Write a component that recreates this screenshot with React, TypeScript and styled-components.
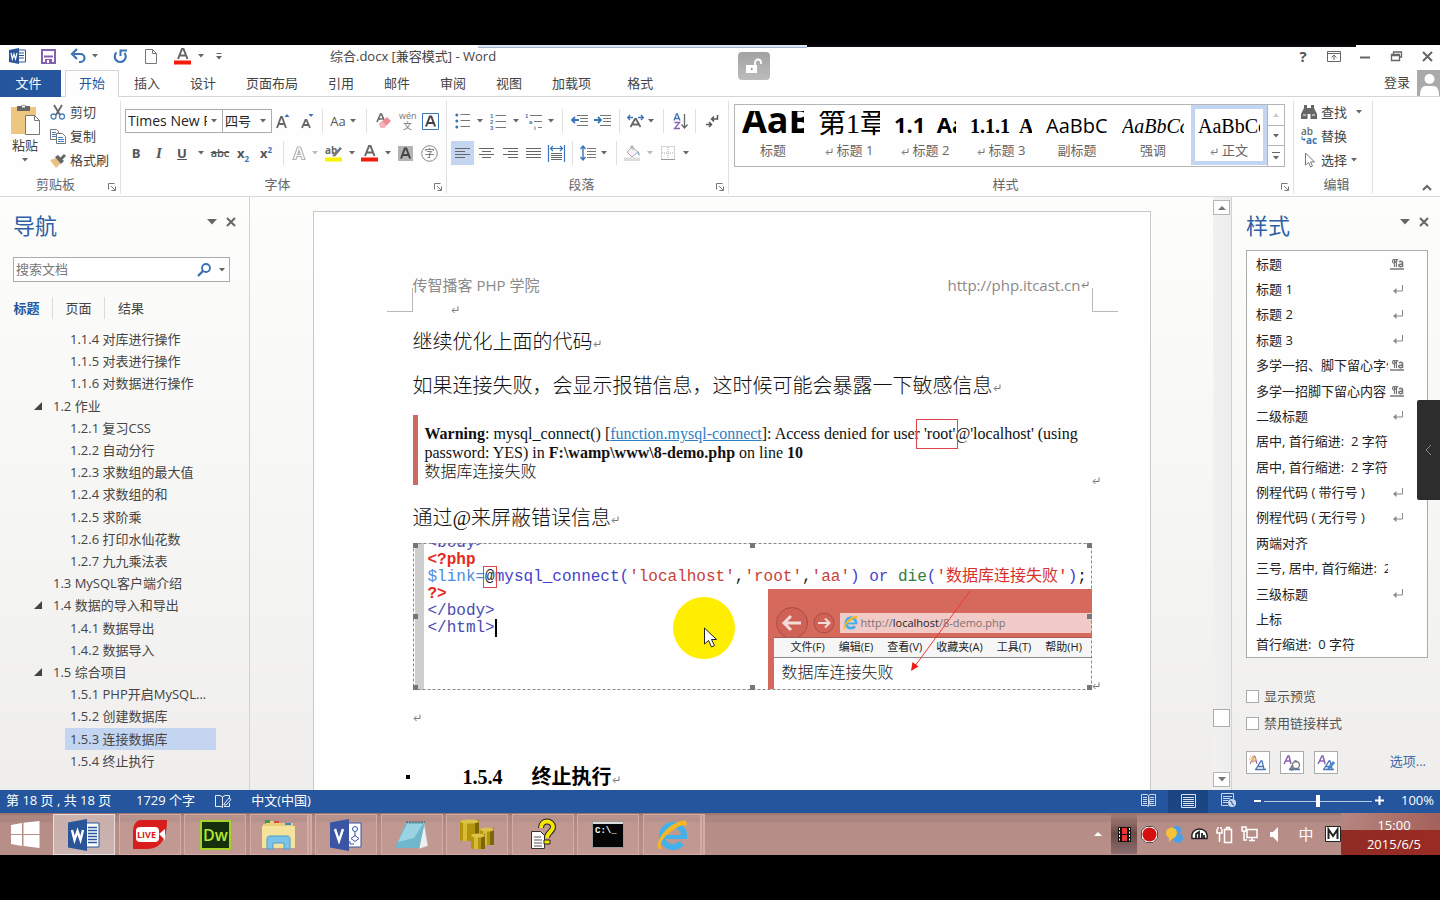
import React from 'react';
import styled, { createGlobalStyle, css } from 'styled-components';

const UI = `"Open Sans", "Noto Sans", "Noto Sans CJK SC", sans-serif`;
const SERIF = `"Liberation Serif", "Noto Sans CJK SC", serif`;
const MONO = `"Liberation Mono", "Noto Sans CJK SC", monospace`;
const BLUE = '#25569d';

const Global = createGlobalStyle`
  * { box-sizing: border-box; }
  body { margin: 0; background: #000; font: 13px/20px ${UI}; color: #444; }
  button, input, select { font: inherit; color: inherit; }
  button { border: 0; padding: 0; background: none; cursor: pointer; }
  svg { display: block; flex: none; overflow: visible; }
`;

const Screen = styled.div`
  min-height: 100vh;
  padding: 45px 0;
  display: flex;
  flex-direction: column;
  position: relative;
`;

const Row = styled.div<{ $gap?: number }>`
  display: flex;
  align-items: center;
  gap: ${p => p.$gap ?? 0}px;
`;

/* ---------- title bar and tabs ---------- */
const TitleBar = styled.header`
  height: 25px;
  display: flex;
  align-items: center;
  background: #fefefe;
  padding: 0 0 3px 8px;
`;
const QuickBar = styled.div`
  display: flex;
  align-items: center;
  width: 322px;
`;
const Tool = styled.button<{ $w: number; $on?: boolean; $dark?: boolean }>`
  width: ${p => p.$w}px;
  height: 24px;
  flex: none;
  display: flex;
  align-items: center;
  justify-content: center;
  background: ${p => (p.$on ? '#c3d5f1' : p.$dark ? '#1b4583' : 'none')};
`;
const DocTitle = styled.h1`
  margin: 0;
  font-size: 13px;
  font-weight: 400;
  flex: 1;
`;
const WindowButtons = styled.div`
  display: flex;
  gap: 5px;
`;
const TopStrip = styled.div`
  position: absolute;
  top: 45px;
  left: 33.2%;
  right: 5.8%;
  height: 2px;
  display: flex;
`;
const StripBlue = styled.div`
  flex: 329;
  height: 3px;
  background: #dbe6f5;
  border-bottom: 1px solid #9fb3d3;
`;
const StripBlack = styled.div`
  flex: 550;
  background: #0b0b12;
`;
const LockBadge = styled.button`
  position: absolute;
  top: 52px;
  left: 738px;
  width: 32px;
  height: 28px;
  border-radius: 4px;
  background: linear-gradient(#a2a2a2, #bcbcbc);
  display: flex;
  align-items: center;
  justify-content: center;
`;
const TabRow = styled.nav`
  height: 27px;
  display: flex;
  background: #fefefe;
  border-bottom: 1px solid #d4d4d4;
`;
const FileTab = styled.button`
  width: 61px;
  height: 27px;
  padding: 0 4px 2px 0;
  background: ${BLUE};
  color: #fff;
`;
const Tab = styled.button<{ $active?: boolean; $apart?: boolean }>`
  height: 27px;
  padding: 0 15px 2px;
  ${p => p.$apart && css`margin-left: 6px;`}
  ${p => p.$active && css`
    width: 54px;
    margin: 0 0 0 4px;
    padding: 0 0 2px;
    color: ${BLUE};
    background: #fefefe;
    border: 1px solid #d4d4d4;
    border-bottom: 0;
  `}
`;
const SignIn = styled.div`
  margin-left: auto;
  display: flex;
  gap: 7px;
  button { padding-bottom: 2px; }
`;

/* ---------- ribbon ---------- */
const Ribbon = styled.section`
  height: 100px;
  display: flex;
  background: #fefefe;
  border-bottom: 1px solid #d9d9d9;
  position: relative;
`;
const Group = styled.div<{ $w?: number; $pad?: number; $grow?: boolean }>`
  ${p => (p.$grow ? css`flex: 1; min-width: 0;` : css`width: ${p.$w}px; flex: none;`)}
  display: flex;
  flex-direction: column;
  padding-left: ${p => p.$pad ?? 4}px;
  border-right: 1px solid;
  border-image: linear-gradient(transparent 4%, #e0e0e0 5%, #e0e0e0 96%, transparent 97%) 1;
`;
const GroupBody = styled.div<{ $top: number }>`
  height: 78px;
  padding-top: ${p => p.$top}px;
`;
const GroupFoot = styled.div`
  height: 20px;
  display: flex;
  align-items: center;
  padding-bottom: 2px;
  color: #666;
  & > span { flex: 1; text-align: center; }
`;
const Launcher = styled.button`
  width: 16px;
  height: 16px;
  padding: 6px 0 0 4px;
`;
const ToolRows = styled.div`
  display: flex;
  flex-direction: column;
  gap: 8px;
`;
const ToolRow = styled.div`
  height: 24px;
  display: flex;
  align-items: center;
`;
const SepBox = styled.span<{ $w: number }>`
  width: ${p => p.$w}px;
  height: 24px;
  flex: none;
  display: flex;
  justify-content: center;
  &::before { content: ''; width: 1px; background: #e0e0e0; }
`;
const PasteButton = styled.button`
  width: 36px;
  height: 70px;
  display: flex;
  flex-direction: column;
  align-items: center;
  span { line-height: 18px; margin-bottom: 4px; }
`;
const SmallButton = styled.button`
  height: 24px;
  display: flex;
  align-items: center;
  gap: 4px;
  padding-bottom: 2px;
`;
const ComboWrap = styled.div<{ $w: number }>`
  width: ${p => p.$w}px;
  height: 24px;
  flex: none;
  display: flex;
  align-items: center;
  gap: 4px;
  border: 1px solid #ababab;
  margin-right: -1px;
  padding-right: 5px;
  background: #fff;
`;
const Combo = styled.select<{ $size?: number }>`
  appearance: none;
  flex: 1;
  min-width: 0;
  height: 20px;
  border: 0;
  padding: 0 0 0 2px;
  background: none;
  color: #222;
  font-size: ${p => p.$size ?? 13}px;
  text-overflow: clip;
  overflow: hidden;
`;
const Glyph = styled.span<{ $size?: number; $weight?: number; $italic?: boolean; $line?: string; $serif?: boolean; $color?: string }>`
  font-size: ${p => p.$size ?? 13}px;
  font-weight: ${p => p.$weight ?? 700};
  font-style: ${p => (p.$italic ? 'italic' : 'normal')};
  font-family: ${p => (p.$serif ? SERIF : UI)};
  text-decoration: ${p => p.$line ?? 'none'};
  color: ${p => p.$color ?? '#555'};
  sub, sup { font-size: 8px; line-height: 0; color: #3b75b5; }
`;
const Gallery = styled.div`
  height: 63px;
  margin-right: 8px;
  display: flex;
  border: 1px solid #b5b5b5;
`;
const GalleryItem = styled.button<{ $on?: boolean }>`
  flex: 1;
  min-width: 0;
  height: 60px;
  padding: 6px 7px 2px;
  display: flex;
  flex-direction: column;
  color: #666;
  ${p => p.$on && css`box-shadow: inset 0 0 0 4px #c3d5f1;`}
`;
const Preview = styled.div<{ $size: number; $bold?: boolean; $italic?: boolean; $serif?: boolean }>`
  width: 100%;
  height: 30px;
  flex: none;
  overflow: hidden;
  white-space: pre;
  text-align: left;
  line-height: 0;
  color: #000;
  font-family: ${p => (p.$serif ? SERIF : UI)};
  font-size: ${p => p.$size}px;
  font-weight: ${p => (p.$bold ? 700 : 400)};
  font-style: ${p => (p.$italic ? 'italic' : 'normal')};
  &::before { content: ''; display: inline-block; height: 22px; }
`;
const PreviewName = styled.div`
  width: 100%;
  display: flex;
  align-items: center;
  justify-content: center;
  gap: 4px;
  line-height: 18px;
  svg { margin-top: 4px; }
`;
const GallerySteps = styled.div`
  width: 17px;
  display: flex;
  flex-direction: column;
  border-left: 1px solid #b5b5b5;
  button { flex: 1; display: flex; align-items: center; justify-content: center; }
  button + button { border-top: 1px solid #b5b5b5; }
`;
const RibbonEnd = styled.div`
  width: 67px;
  display: flex;
  align-items: flex-end;
  justify-content: flex-end;
  padding: 0 8px 5px 0;
`;

/* ---------- main area ---------- */
const Main = styled.main`
  flex: 1 1 0;
  min-height: 520px;
  display: flex;
  overflow: hidden;
  background: linear-gradient(#fdfdfc, #f7f7f6 45%, #efeeed);
`;
const Pane = styled.aside<{ $w: number; $side: 'left' | 'right' }>`
  width: ${p => p.$w}px;
  flex: none;
  display: flex;
  flex-direction: column;
  ${p => p.$side === 'left'
    ? css`border-right: 1px solid #d2d2d2; padding: 12px 0 18px;`
    : css`border-left: 1px solid #d2d2d2; padding: 12px 12px 16px 14px;`}
`;
const PaneHead = styled.div`
  height: 32px;
  flex: none;
  display: flex;
  align-items: center;
  h2 { margin: 0; flex: 1; font-size: 22px; line-height: 32px; font-weight: 400; color: #2f5fa5; }
  button { width: 19px; height: 20px; display: flex; align-items: center; justify-content: center; margin-bottom: 6px; }
  ${Pane}:first-child & { padding: 0 9px 0 13px; }
  ${Pane}:last-child & { margin-right: -5px; }
`;
const SearchBox = styled.div`
  margin: 16px 19px 0 13px;
  height: 25px;
  flex: none;
  display: flex;
  align-items: center;
  gap: 7px;
  padding-right: 4px;
  border: 1px solid #ababab;
  background: #fff;
  input { flex: 1; min-width: 0; height: 22px; border: 0; outline: 0; padding: 0 2px 2px; background: none; }
  input::placeholder { color: #777; opacity: 1; }
`;
const PaneTabs = styled.div`
  height: 22px;
  flex: none;
  margin: 15px 0 9px 1px;
  display: flex;
  button { width: 52px; border-right: 1px solid #dcdcdc; color: #444; }
  button:first-child { color: ${BLUE}; font-weight: 700; }
  button:last-child { border: 0; width: 52px; }
`;
const Outline = styled.ul`
  flex: 1;
  margin: 0;
  padding: 0;
  list-style: none;
  display: grid;
  grid-auto-rows: 1fr;
`;
const OutlineItem = styled.li<{ $level: number; $on?: boolean }>`
  display: flex;
  align-items: center;
  margin: 0 33px 0 ${p => (p.$level === 3 ? 65 : 34)}px;
  padding-left: ${p => (p.$level === 3 ? 5 : 0)}px;
  background: ${p => (p.$on ? '#c3d5f1' : 'none')};
  white-space: nowrap;
  a { color: inherit; text-decoration: none; }
`;
const Twist = styled.span`
  width: 19px;
  flex: none;
`;
const DocArea = styled.div`
  flex: 1;
  min-width: 0;
  padding-top: 14px;
  display: flex;
  justify-content: center;
  overflow: hidden;
`;
const Page = styled.article`
  width: 838px;
  padding: 61px 58px 0 99px;
  border: 1px solid #c9c9c9;
  border-bottom: 0;
  background: #fefefe;
  color: #333;
`;
const PageHeader = styled.div`
  position: relative;
  height: 24px;
  display: flex;
  justify-content: space-between;
  align-items: center;
  padding-right: 3px;
  font-size: 15px;
  color: #8a8a8a;
`;
const Corner = styled.i<{ $side: 'left' | 'right' }>`
  position: absolute;
  top: 15px;
  width: 26px;
  height: 24px;
  border-bottom: 1px solid #b9b9b9;
  ${p => (p.$side === 'left'
    ? css`right: 100%; border-right: 1px solid #b9b9b9;`
    : css`left: 100%; border-left: 1px solid #b9b9b9;`)}
`;
const MarkRow = styled.div`
  height: 23px;
  padding: 9px 0 0 38px;
`;
const Para = styled.p<{ $before?: number }>`
  margin: ${p => p.$before ?? 0}px 0 0;
  height: 44px;
  display: flex;
  align-items: center;
  white-space: nowrap;
  font: 300 20px/44px ${SERIF};
  color: #111;
  em { font-weight: 400; }
  svg { margin-top: 4px; }
`;
const Warning = styled.div`
  margin-top: 7px;
  height: 70px;
  padding: 9px 0 0 7px;
  border-left: 5px solid #cf6a62;
  font: 16px/19px ${SERIF};
  color: #111;
  position: relative;
  a { color: #2f7fc4; }
`;
const LightLine = styled.span`
  font-weight: 300;
`;
const EndMark = styled.span`
  position: absolute;
  left: 100%;
  bottom: 0;
`;
const Boxed = styled.span`
  position: relative;
  &::after {
    content: '';
    position: absolute;
    inset: -6px -2px -7px -8px;
    border: 1px solid #e0444c;
  }
`;
const Shot = styled.figure`
  position: relative;
  margin: 3px 0 4px;
  height: 147px;
  background: #fefefe;
`;
const Frame = styled.svg`
  position: absolute;
  inset: 0;
  width: 100%;
  height: 100%;
`;
const Code = styled.div`
  height: 100%;
  margin-left: 2px;
  padding-left: 4px;
  border-left: 9px solid #cfcfcf;
  font: 16px/17px ${MONO};
  overflow: hidden;
  white-space: pre;
`;
const CodeLine = styled.div<{ $cut?: boolean }>`
  height: ${p => (p.$cut ? 9 : 17)}px;
  ${p => p.$cut && css`display: flex; align-items: flex-end; overflow: hidden;`}
`;
const Tok = styled.span<{ $c: string; $bold?: boolean }>`
  color: ${p => p.$c};
  font-weight: ${p => (p.$bold ? 700 : 400)};
`;
const AtBox = styled.span`
  color: #222;
  outline: 1px solid #e0444c;
  outline-offset: 1px;
`;
const Caret = styled.span`
  border-right: 2px solid #000;
`;
const Browser = styled.div`
  position: absolute;
  right: 0;
  bottom: 1px;
  width: 324px;
  height: 100px;
  padding-left: 6px;
  background: #d5695c;
  display: flex;
  flex-direction: column;
`;
const AddressRow = styled.div`
  height: 48px;
  padding: 19px 0 0 2px;
  display: flex;
  align-items: center;
  gap: 5px;
`;
const Address = styled.div`
  flex: 1;
  height: 20px;
  display: flex;
  align-items: center;
  gap: 3px;
  padding-left: 3px;
  background: #f1cbc8;
  font-size: 11px;
  color: #7f7070;
  b { font-weight: 400; color: #222; }
`;
const BrowserMenu = styled.div`
  height: 21px;
  display: flex;
  align-items: center;
  gap: 14px;
  padding: 0 0 2px 17px;
  background: #f7f6f6;
  border-top: 1px solid #a85a52;
  border-bottom: 1px solid #888;
  font-size: 11px;
  line-height: 16px;
  color: #222;
  white-space: nowrap;
`;
const BrowserBody = styled.div`
  flex: 1;
  padding-left: 8px;
  background: #fefefe;
  font: 300 16px/30px ${SERIF};
  color: #222;
`;
const Pointer = styled.div`
  position: absolute;
  left: 260px;
  top: 54px;
`;
const Heading = styled.h3`
  margin: 17px 0 0 -7px;
  display: flex;
  align-items: center;
  font: 700 20px/44px ${SERIF};
  color: #000;
  &::before { content: ''; width: 4px; height: 4px; margin-right: 53px; background: #000; }
  span { width: 69px; }
  svg { margin-top: 6px; }
`;
const ScrollBar = styled.div`
  width: 18px;
  flex: none;
  display: flex;
  flex-direction: column;
  justify-content: space-between;
  padding: 3px 1px 3px 0;
  background: linear-gradient(90deg, #f1f1f1, #ededed);
`;
const ScrollButton = styled.button`
  height: 15px;
  display: flex;
  align-items: center;
  justify-content: center;
  border: 1px solid #b5b5b5;
  background: #fefefe;
`;
const ScrollEnd = styled.div`
  display: flex;
  flex-direction: column;
  gap: 45px;
`;
const ScrollThumb = styled.div`
  height: 18px;
  border: 1px solid #ababab;
  background: #fefefe;
`;
const StyleList = styled.ul`
  flex: 1;
  margin: 9px 0 28px;
  padding: 0;
  list-style: none;
  display: grid;
  grid-auto-rows: 1fr;
  border: 1px solid #ababab;
  background: #fefefe;
  color: #222;
  li { display: flex; align-items: center; padding: 0 23px 0 9px; }
  li > span { width: 132px; white-space: pre; overflow: hidden; }
  li > svg { margin-left: auto; }
`;
const Check = styled.label`
  height: 20px;
  flex: none;
  margin-bottom: 7px;
  display: flex;
  align-items: center;
  gap: 5px;
  color: #555;
  input { appearance: none; margin: 0; width: 13px; height: 13px; border: 1px solid #ababab; background: #fefefe; }
`;
const StyleActions = styled.div`
  flex: none;
  margin-top: 11px;
  display: flex;
  align-items: center;
  gap: 10px;
  button { width: 24px; height: 23px; border: 1px solid #ababab; background: #fefefe; display: flex; align-items: center; justify-content: center; }
  a { margin-left: auto; padding: 0 2px 3px 0; color: #3f6ba8; text-decoration: none; }
`;
const SideHandle = styled.button`
  position: absolute;
  right: 0;
  top: 400px;
  width: 23px;
  height: 100px;
  background: #2d2d2d;
  border-radius: 2px 0 0 2px;
  display: flex;
  align-items: center;
  justify-content: center;
`;

/* ---------- status bar ---------- */
const StatusBar = styled.footer`
  height: 23px;
  display: flex;
  align-items: center;
  padding: 0 6px;
  gap: 20px;
  background: ${BLUE};
  color: #fff;
  white-space: nowrap;
  span { padding-bottom: 3px; }
`;
const PageCount = styled.span`
  width: 110px;
`;
const ViewButtons = styled.div`
  height: 23px;
  margin-left: auto;
  display: flex;
  align-items: center;
  button { height: 23px; padding-bottom: 2px; }
`;
const ZoomRange = styled.input`
  appearance: none;
  width: 108px;
  height: 20px;
  margin: 0;
  background: none;
  &::-webkit-slider-runnable-track { height: 1px; background: #b9cbe5; }
  &::-webkit-slider-thumb { appearance: none; width: 4px; height: 12px; margin-top: -6px; background: #fff; }
`;
const ZoomValue = styled.span`
  width: 48px;
  text-align: right;
`;

/* ---------- taskbar ---------- */
const TaskBar = styled.div`
  height: 42px;
  display: flex;
  align-items: center;
  background: linear-gradient(#93706c 0, #b08680 3px, #a98580 8px, #b68c86 10px, #b88f89);
`;
const StartButton = styled.button`
  width: 53px;
  padding-left: 11px;
`;
const TaskButtons = styled.div`
  width: 652px;
  height: 42px;
  display: flex;
  justify-content: space-between;
`;
const TaskButton = styled.button<{ $on?: boolean; $stack?: boolean }>`
  width: 62px;
  height: 41px;
  margin-top: 1px;
  display: flex;
  align-items: center;
  justify-content: center;
  border: 1px solid #d3aca6;
  background: ${p => (p.$on ? 'linear-gradient(#cdb3af, #c9afab 20%, #cbb5b3)' : 'rgba(255,220,215,0.14)')};
  ${p => p.$on && css`border-color: #e9dcda;`}
  ${p => p.$stack && css`border-right: 5px double #d3aca6;`}
`;
const Tray = styled.div`
  margin-left: auto;
  height: 42px;
  display: flex;
  align-items: center;
`;
const TrayItem = styled.button<{ $w: number; $on?: boolean }>`
  width: ${p => p.$w}px;
  height: 40px;
  display: flex;
  align-items: center;
  justify-content: center;
  background: ${p => (p.$on ? 'linear-gradient(rgba(90,60,58,0.1), rgba(80,50,48,0.75) 50%, rgba(100,80,90,0.5))' : 'none')};
`;
const Clock = styled.div`
  width: 99px;
  height: 42px;
  color: #fff;
  text-align: center;
  display: flex;
  flex-direction: column;
  time { padding-left: 7px; flex: none; }
  time:first-child { height: 17px; line-height: 24px; background: linear-gradient(90deg, #b58680, #a5605a); position: relative; }
  time:last-child { height: 25px; line-height: 28px; background: linear-gradient(90deg, #8f2c25, #9a2b22); }
`;

/* ---------- drawings ---------- */
type SvgProps = { w: number; h: number; children: React.ReactNode };
const S = ({ w, h, children }: SvgProps) => (
  <svg width={w} height={h} viewBox={`0 0 ${w} ${h}`} fill="none" aria-hidden="true">{children}</svg>
);
const Down = ({ c = '#666', s = 6 }: { c?: string; s?: number }) => (
  <S w={s} h={s / 2 + 1}><path d={`M0 0h${s}l-${s / 2} ${s / 2 + 0.5}z`} fill={c} /></S>
);
const Drop = ({ w, c }: { w: number; c?: string }) => <Tool $w={w} aria-label="更多"><Down c={c} /></Tool>;
const Ret = ({ c = '#777' }: { c?: string }) => (
  <S w={8} h={8}><path d="M7 0.500v4H1.500M3.500 2L1 4.500l2.500 2.500" stroke={c} /></S>
);
const RetBig = () => (
  <S w={12} h={11}><path d="M10.500 1v6H3" stroke="#888" /><path d="M4.500 4v6L1 7z" fill="#888" /></S>
);
const Linked = () => (
  <S w={14} h={12}>
    <path d="M6.500 9V1M4.500 9V1M7.500 1.500H3.500a2 2 0 000 3.500H4.500z" stroke="#777" strokeWidth="1.200" />
    <path d="M9 4c1-1 3.500-1 3.500.7V9M12.500 6c-2 0-3.700.3-3.700 1.600S11.500 9 12.500 8" stroke="#777" strokeWidth="1.600" />
    <path d="M0 11h14" stroke="#777" strokeWidth="1.500" />
  </S>
);
const Close = ({ s = 10 }: { s?: number }) => (
  <S w={s} h={s}><path d={`M1 1L${s - 1} ${s - 1}M${s - 1} 1L1 ${s - 1}`} stroke="#666" strokeWidth="2" /></S>
);
const Launch = () => (
  <Launcher aria-label="对话框">
    <S w={8} h={8}><path d="M0.500 6.500v-6h6M3 3l4 4M7.500 3.500v4h-4" stroke="#777" /></S>
  </Launcher>
);
const Lines = ({ rows }: { rows: [number, number][] }) => (
  <S w={15} h={10}>{rows.map(([a, b], i) => <path key={i} d={`M${a} ${i * 3 + 0.5}H${b}`} stroke="#666" />)}</S>
);
const WordMini = () => (
  <S w={17} h={16}>
    <path d="M9 2h7.500v12H9" fill="#fff" stroke="#2b579a" /><path d="M10 5h5M10 7.500h5M10 10h5" stroke="#2b579a" />
    <path d="M0 2l10-2v16L0 14z" fill="#2b579a" /><path d="M2 5l1.400 6L5 6l1.500 5L8 5" stroke="#fff" strokeWidth="1.200" />
  </S>
);
const Save = () => (
  <S w={15} h={15}><path d="M1 1h13v13H1z" stroke="#8560b0" strokeWidth="2" /><path d="M3 7.500h9" stroke="#8560b0" strokeWidth="2" /><path d="M4 10h7v4H4z" fill="#8560b0" /><path d="M6 11h2v3H6z" fill="#fff" /></S>
);
const Undo = () => (
  <S w={16} h={14}><path d="M3 5h6.500a4 4 0 010 8H8" stroke="#3b75b5" strokeWidth="2.200" /><path d="M6 0L1 5l5 5" stroke="#3b75b5" strokeWidth="2.200" /></S>
);
const Redo = () => (
  <S w={15} h={15}><path d="M3.500 3.500A5.500 5.500 0 1011.500 4" stroke="#3b75b5" strokeWidth="2.200" /><path d="M7.500 7V1.500H14" stroke="#3b75b5" strokeWidth="2" /></S>
);
const Blank = () => <S w={12} h={15}><path d="M0.500 0.500h7l4 4v10H0.500zM7.500 0.500v4h4" stroke="#777" /></S>;
const AColor = ({ c = '#f21b0c' }: { c?: string }) => (
  <S w={17} h={17}><path d="M4 11L8 1h1.500l4 10M5.500 7.500h6.500" stroke="#666" strokeWidth="2" /><path d="M0 12.500h17v4H0z" fill={c} /></S>
);
const Clipboard = () => (
  <S w={31} h={34}>
    <path d="M1 5h25v27H1z" fill="#edc680" /><path d="M7 4h4a3 3 0 015 0h4v5H7z" fill="#666" /><path d="M12 3.500h3v2h-3z" fill="#fff" />
    <path d="M15.500 13.500h9l5 5v14h-14z" fill="#fff" stroke="#777" /><path d="M24.500 13.500v5h5" stroke="#777" />
  </S>
);
const Scissors = () => (
  <S w={16} h={16}>
    <path d="M4 1l6 10M12 1L6 11" stroke="#666" strokeWidth="1.800" /><circle cx="3.500" cy="12.500" r="2.500" stroke="#4a80bd" strokeWidth="1.300" /><circle cx="12" cy="12.500" r="2.500" stroke="#4a80bd" strokeWidth="1.300" />
  </S>
);
const CopyIcon = () => (
  <S w={16} h={15}><path d="M0.500 0.500h6l2 2v8h-8z" stroke="#777" /><path d="M2 3.500h4M2 5.500h4M2 7.500h4" stroke="#4a80bd" /><path d="M6.500 4.500h6l3 3v7h-9z" fill="#fff" stroke="#777" /><path d="M8 8.500h5M8 10.500h6M8 12.500h6" stroke="#4a80bd" /></S>
);
const Brush = () => (
  <S w={16} h={15}><path d="M0 7l6-2 5 5-5 5z" fill="#edc080" /><path d="M5 4l3-2 6 6-3 3z" fill="#666" /><path d="M10 5l4-4 2 2-4 4z" fill="#666" /></S>
);
const GrowA = ({ up }: { up?: boolean }) => (
  <S w={14} h={16}>
    <path d={up ? 'M1 15L5 4h1l4 11M2.500 11h6' : 'M2 15l3.500-8h1L10 15M3.500 12h5'} stroke="#666" strokeWidth="1.800" />
    <path d={up ? 'M8.500 4h5L11 1z' : 'M8.500 1h5L11 4z'} fill="#3b75b5" />
  </S>
);
const Eraser = () => (
  <S w={16} h={16}><path d="M1 9L4.500 1h1L8 7M2.500 6h4" stroke="#666" strokeWidth="1.600" /><path d="M3 11l8-7 4 4-7 7H5z" fill="#ee8b98" /><path d="M3 11l3-3 4 4.500-2 2.500H5z" fill="#f5b3bb" /></S>
);
const BoxA = ({ shade }: { shade?: boolean }) => (
  <S w={17} h={17}>
    <path d={shade ? 'M1 1h15v15H1z' : 'M0.500 0.500h16v16H0.500z'} fill={shade ? '#b4b4b4' : '#fff'} stroke={shade ? 'none' : '#3b75b5'} />
    <path d="M4 13.500L7.800 3.500h1.500l3.800 10M5.500 10h6" stroke="#444" strokeWidth="2" />
  </S>
);
const Wen = () => (
  <S w={17} h={18}>
    <text x="0" y="7" fontSize="9" fill="#777" fontFamily="Open Sans">wén</text>
    <text x="4" y="17" fontSize="9" fill="#777" fontFamily="Noto Sans CJK SC">文</text>
  </S>
);
const ZiCircle = () => (
  <S w={17} h={17}><circle cx="8.500" cy="8.500" r="7.800" stroke="#888" /><text x="3.500" y="12.300" fontSize="10" fill="#666" fontFamily="Noto Sans CJK SC">字</text></S>
);
const OutlineA = () => <S w={14} h={15}><path d="M1 13.500L5.500 1h3L13 13.500h-3L9 10.500H5L4 13.500zM7 4.500l-1.300 4h2.600z" stroke="#b5b5b5" strokeWidth="1.200" /></S>;
const Highlight = () => (
  <S w={18} h={17}><text x="0" y="9" fontSize="10" fontWeight="700" fill="#666" fontFamily="Open Sans">ab</text><path d="M7 11l8-9 2 1.500-7 8z" fill="#777" /><path d="M0 12.500h17v4H0z" fill="#fbf100" /></S>
);
const Bullets = () => <S w={15} h={16}>{[2, 8, 14].map(y => <g key={y}><circle cx="1.800" cy={y} r="1.500" fill="#3b75b5" /><path d={`M5.500 ${y - 0.5}H15`} stroke="#777" /></g>)}</S>;
const Numbers = () => (
  <S w={16} h={17}>{['1', '2', '3'].map((n, i) => <g key={n}><text x="0" y={5 + i * 6} fontSize="6" fontWeight="700" fill="#3b75b5" fontFamily="Liberation Sans">{n}</text><path d={`M5.500 ${2.5 + i * 6}H16`} stroke="#777" /></g>)}</S>
);
const Multi = () => (
  <S w={17} h={17}><path d="M5 2.500h12M9 8.500h8M13 14.500h4" stroke="#777" /><text x="0" y="5" fontSize="6" fontWeight="700" fill="#3b75b5" fontFamily="Liberation Sans">1</text><text x="4" y="11" fontSize="6" fontWeight="700" fill="#3b75b5" fontFamily="Liberation Sans">a</text><text x="9" y="17" fontSize="6" fontWeight="700" fill="#3b75b5" fontFamily="Liberation Sans">i</text></S>
);
const Indent = ({ out }: { out?: boolean }) => (
  <S w={17} h={12}><path d="M6 0.500h11M9 3.500h8M9 6.500h8M6 10.500h11" stroke="#777" /><path d={out ? 'M8 5H1M4 2L1 5l3 3' : 'M0 5h7M4 2l3 3-3 3'} stroke="#3b75b5" strokeWidth="1.800" /></S>
);
const AsianA = () => (
  <S w={17} h={14}><path d="M3.500 13L8 5h1l4.500 8M5.500 10.500h6" stroke="#666" strokeWidth="1.800" /><path d="M6 3.500H1M3 1L0.700 3.500 3 6M11 3.500h5M14 1l2.300 2.500L14 6" stroke="#3b75b5" strokeWidth="1.300" /></S>
);
const SortAZ = () => (
  <S w={15} h={17}><path d="M1 7.500L3.500 1h.8L7 7.500M2 5.500h4" stroke="#3b75b5" strokeWidth="1.300" /><path d="M1.500 9.500h5L1.500 15.500h5.500" stroke="#8a5fb5" strokeWidth="1.300" /><path d="M11.500 1v14M8.500 11.500l3 3.500 3-3.500" stroke="#666" strokeWidth="1.300" /></S>
);
const ShowMarks = () => (
  <S w={13} h={14}><path d="M11.500 1v4H6M8 2.500L5.500 5 8 7.500M0 10.500h5M3 8l2.500 2.500L3 13" stroke="#555" strokeWidth="1.500" /></S>
);
const Distribute = () => (
  <S w={17} h={17}><path d="M0.500 0v17M16.500 0v17M3 3.500h11M5 1L2.500 3.500 5 6M12 1l2.500 2.500L12 6" stroke="#3b75b5" strokeWidth="1.200" /><path d="M3 8.500h11M3 10.500h11M3 12.500h11M3 14.500h11" stroke="#666" /></S>
);
const Spacing = () => (
  <S w={16} h={16}><path d="M3 1v14M0.500 4L3 1l2.500 3M0.500 12L3 15l2.500-3" stroke="#3b75b5" strokeWidth="1.400" /><path d="M7 3.500h9M7 6.500h9M7 9.500h9M7 12.500h9" stroke="#777" /></S>
);
const Bucket = () => (
  <S w={18} h={16}><path d="M3 7l5-5 6 5-6 5z" stroke="#aaa" fill="#f6f1f8" /><path d="M7 4V1h2v4" stroke="#aaa" /><path d="M13 6c2 1 3 2 2.500 5-1.500-1-2-3-2.500-5z" fill="#8aa6cc" /><path d="M0 12.500h16V16H0z" fill="#dcdcdc" /></S>
);
const Borders = () => <S w={14} h={14}><path d="M0.500 0.500h13v13H0.500zM7 1v12M1 7h12" stroke="#aaa" strokeDasharray="1 1" /><path d="M0 13.500h14" stroke="#999" /></S>;
const Binoculars = () => (
  <S w={16} h={14}><path d="M3 0h3v3h4V0h3v3l3 6v5H9.500V9h-3v5H0V9l3-6z" fill="#666" /><path d="M2 10h3M11 10h3" stroke="#fff" /></S>
);
const Replace = () => (
  <S w={16} h={17}><text x="0" y="7" fontSize="10" fontWeight="600" fill="#666" fontFamily="Open Sans">ab</text><text x="5" y="16" fontSize="10" fontWeight="700" fill="#3b75b5" fontFamily="Open Sans">ac</text><path d="M1 8.500v3h3M2.700 10L4 11.500 2.700 13" stroke="#3b75b5" /></S>
);
const ArrowPick = () => <S w={16} h={16}><path d="M4.500 1v12l3-2.500L9.500 15l2-1-2-4h4z" fill="#fff" stroke="#777" /></S>;
const Avatar = () => <S w={23} h={26}><path d="M0 0h23v26H0z" fill="#aaa" /><circle cx="12.500" cy="9" r="5" fill="#fff" /><path d="M3 26c0-8 3-10 6-10h7c4 0 6 3 6 10z" fill="#fff" /></S>;
const Magnifier = () => <S w={15} h={14}><circle cx="9" cy="5" r="4" stroke="#3b6fb5" strokeWidth="1.800" /><path d="M6 8L1 13" stroke="#3b6fb5" strokeWidth="2.400" /></S>;
const StyleIcon = ({ kind }: { kind: number }) => (
  <S w={18} h={16}>
    <path d="M1 9L5 1h1l2 8M3 6h4" stroke="#8a62b0" strokeWidth={kind ? 1.5 : 1} />
    <path d="M7 14l5-8h1l2 8M9 11.500h5M6 14.500h11" stroke="#4a76b8" strokeWidth="1.300" />
    {kind === 0 && <path d="M4 0v8M0 4h8M1 1l6 6M7 1L1 7" stroke="#e9b872" />}
    {kind === 1 && <><circle cx="13" cy="10" r="3.500" fill="#fff" stroke="#777" strokeWidth="1.300" /><path d="M10.500 12.500L8 15.500" stroke="#777" strokeWidth="2" /></>}
    {kind === 2 && <path d="M10 15l1-3 5-6 2 2-5 6z" fill="#4a86c8" />}
  </S>
);
const IELogo = ({ s }: { s: number }) => (
  <svg width={s} height={s} viewBox="0 0 32 32" fill="none" aria-hidden="true">
    <path d="M28 18a11 11 0 10-2.500 6" stroke="#43b1ea" strokeWidth="6" />
    <path d="M8 18h23" stroke="#43b1ea" strokeWidth="4" />
    <path d="M3 30C-1 26 6 11 18 5S32 1 30 8c-1-3-6-2-13 3S1 25 6 29c-1 1-2 1.500-3 1z" fill="#f6b822" />
  </svg>
);
const OfficeTile = ({ visio }: { visio?: boolean }) => (
  <S w={32} h={32}>
    <path d="M17 4h14v24H17z" fill="#fff" stroke={visio ? '#3955a3' : '#2b579a'} />
    {visio
      ? <><circle cx="25" cy="10" r="2.500" stroke="#3955a3" /><path d="M25 13v4M21 19.500l4-3 4 3-4 3zM20 22v3h4" stroke="#3955a3" /></>
      : <path d="M20 8.500h9M20 11.500h9M20 14.500h9M20 17.500h9M20 20.500h9M20 23.500h9" stroke="#2b579a" strokeWidth="1.500" />}
    <path d="M0 3.500L19 0v32L0 28.500z" fill={visio ? '#3955a3' : '#2a5699'} />
    <path d={visio ? 'M5 10l4 12 4-12' : 'M4 11l2.500 10L9.500 12l3 9L15 11'} stroke="#fff" strokeWidth="2.400" />
  </S>
);
const Live = () => (
  <S w={34} h={29}>
    <path d="M8 0h26c0 18-6 29-20 29H0V12C0 5 3 0 8 0z" fill="#d91c1c" /><rect x="3" y="7" width="23" height="15" rx="4" fill="#fff" />
    <path d="M26 14l6-5v11z" fill="#fff" /><text x="4" y="18" fontSize="9" fontWeight="700" fill="#d91c1c" fontFamily="Open Sans">LIVE</text>
  </S>
);
const Dreamweaver = () => (
  <S w={31} h={30}><path d="M1 1h29v28H1z" fill="#15300c" stroke="#a5d129" strokeWidth="2" /><text x="3" y="21" fontSize="16" fontWeight="600" fill="#b4e835" fontFamily="Open Sans">Dw</text></S>
);
const Folder = () => (
  <S w={34} h={31}>
    <path d="M1 5h3V2h10l2 2h15v25H1z" fill="#e9cf78" /><path d="M3 1h5v3H3z" fill="#3c9a4b" /><path d="M12 2h5v2h-5z" fill="#d44" /><path d="M23 4h6v2h-6z" fill="#3a87d0" />
    <path d="M0 7h33v22H0z" fill="#f5e29b" /><path d="M5 30V20c0-2 1-3 3-3h17c2 0 3 1 3 3v10h-6v-6H11v6z" fill="#7cc3ea" stroke="#4b9fd0" />
  </S>
);
const Notepad = () => (
  <S w={34} h={30}>
    <path d="M29 2l4 24-9 3z" fill="#eee" stroke="#aaa" strokeWidth=".5" /><path d="M11 2h19l-6 26H0z" fill="#6fb7cc" /><path d="M12 4h16l-9 14-16 4z" fill="#9ad3e1" /><path d="M11 2h19" stroke="#777" strokeWidth="2" strokeDasharray="2 1" />
  </S>
);
const Cylinders = () => (
  <S w={34} h={31}>
    {[[0, 1, 19, 21], [20, 9, 14, 17], [11, 15, 14, 15]].map(([x, y, w, h]) => (
      <g key={x}><rect x={x} y={y} width={w} height={h} rx="2" fill="#b3940c" /><rect x={x + 3} y={y} width="4" height={h} fill="#d8bc33" /><rect x={x + w - 4} y={y} width="4" height={h} fill="#7d6606" /><ellipse cx={x + w / 2} cy={y + 1.5} rx={w / 2} ry="2" fill="#dcc14b" /></g>
    ))}
  </S>
);
const HelpDoc = () => (
  <S w={24} h={30}>
    <path d="M0.500 11.500h9l4 4v13h-13z" fill="#fff" stroke="#333" /><path d="M3 17h7M3 20h8M3 23h8M3 26h8" stroke="#555" />
    <path d="M10 8c0-9 12-8 12-1 0 5-6 5-6 11" stroke="#222" strokeWidth="6" /><path d="M10 8c0-9 12-8 12-1 0 5-6 5-6 11" stroke="#f5e600" strokeWidth="4" /><path d="M13 20h6v4h-6z" fill="#f5e600" stroke="#222" />
  </S>
);
const Console = () => (
  <S w={32} h={27}><path d="M0.500 0.500h31v26h-31z" fill="#050505" stroke="#999" /><path d="M1 1h30v2H1z" fill="#ddd" /><text x="3" y="12" fontSize="9" fontWeight="700" fill="#fff" fontFamily="Liberation Mono">C:\_</text></S>
);
const WinLogo = () => <S w={29} h={27}><path d="M0 4l11-2v11H0zM12.500 1.800L28.500 0v13h-16zM0 14h11v11L0 23zM12.500 14h16v13l-16-2z" fill="#fff" /></S>;

/* ---------- data ---------- */
const outline: [number, string][] = [
  [3, '1.1.4 对库进行操作'], [3, '1.1.5 对表进行操作'], [3, '1.1.6 对数据进行操作'],
  [2, '1.2 作业'], [3, '1.2.1 复习CSS'], [3, '1.2.2 自动分行'], [3, '1.2.3 求数组的最大值'],
  [3, '1.2.4 求数组的和'], [3, '1.2.5 求阶乘'], [3, '1.2.6 打印水仙花数'], [3, '1.2.7 九九乘法表'],
  [1, '1.3 MySQL客户端介绍'], [2, '1.4 数据的导入和导出'], [3, '1.4.1 数据导出'], [3, '1.4.2 数据导入'],
  [2, '1.5 综合项目'], [3, '1.5.1 PHP开启MySQL...'], [3, '1.5.2 创建数据库'], [3, '1.5.3 连接数据库'], [3, '1.5.4 终止执行'],
];
const styleNames: [string, 'a' | 'p' | ''][] = [
  ['标题', 'a'], ['标题 1', 'p'], ['标题 2', 'p'], ['标题 3', 'p'], ['多学一招、脚下留心字体', 'a'],
  ['多学一招脚下留心内容', 'a'], ['二级标题', 'p'], ['居中, 首行缩进:  2 字符', ''], ['居中, 首行缩进:  2 字符', ''],
  ['例程代码 ( 带行号 )', 'p'], ['例程代码 ( 无行号 )', 'p'], ['两端对齐', ''], ['三号, 居中, 首行缩进:  2', ''],
  ['三级标题', 'p'], ['上标', ''], ['首行缩进:  0 字符', ''],
];
const gallery = [
  { t: 'AaBb', n: '标题', size: 36, bold: true },
  { t: '第1章', n: '标题 1', size: 28, serif: true, mark: true },
  { t: '1.1  Aa', n: '标题 2', size: 22, bold: true, mark: true },
  { t: '1.1.1  Aa', n: '标题 3', size: 20, serif: true, bold: true, mark: true },
  { t: 'AaBbCc', n: '副标题', size: 20 },
  { t: 'AaBbCc', n: '强调', size: 20, serif: true, italic: true },
  { t: 'AaBbCc', n: '正文', size: 20, serif: true, mark: true, on: true },
];

export default function App() {
  return (
    <Screen>
      <Global />
      <TitleBar>
        <QuickBar>
          <Tool $w={19} aria-label="Word"><WordMini /></Tool>
          <Tool $w={42} aria-label="保存"><Save /></Tool>
          <Tool $w={19} aria-label="撤消"><Undo /></Tool>
          <Drop w={14} />
          <Tool $w={36} aria-label="重做"><Redo /></Tool>
          <Tool $w={26} aria-label="新建"><Blank /></Tool>
          <Tool $w={36} aria-label="字体颜色"><AColor /></Tool>
          <Drop w={1} />
          <Tool $w={36} aria-label="自定义"><S w={6} h={7}><path d="M0.500 0.500h5" stroke="#666" /><path d="M0 3h6L3 6.500z" fill="#666" /></S></Tool>
        </QuickBar>
        <DocTitle>综合.docx [兼容模式] - Word</DocTitle>
        <WindowButtons>
          <Tool $w={26} aria-label="帮助"><Glyph $size={15}>?</Glyph></Tool>
          <Tool $w={26} aria-label="功能区选项"><S w={14} h={11}><path d="M0.500 0.500h13v10H0.500zM0.500 2.500h13M7 9V4.500M4.500 6.500L7 4l2.500 2.500" stroke="#666" /></S></Tool>
          <Tool $w={26} aria-label="最小化"><S w={10} h={6}><path d="M0 4.500h10" stroke="#666" strokeWidth="2" /></S></Tool>
          <Tool $w={26} aria-label="还原"><S w={11} h={10}><path d="M2.500 3V1h8v5h-2M0.500 3.500h8v6h-8zM0.500 4.500h8" stroke="#666" strokeWidth="1.300" /></S></Tool>
          <Tool $w={26} aria-label="关闭"><Close s={11} /></Tool>
        </WindowButtons>
      </TitleBar>
      <TopStrip><StripBlue /><StripBlack /></TopStrip>
      <LockBadge aria-label="解锁">
        <S w={16} h={16}><path d="M0 7h11v8H0z" fill="#fff" /><path d="M9 7V4.500a3 3 0 016 0V6" stroke="#fff" strokeWidth="1.800" /><path d="M5 10h1.500v2H5z" fill="#888" /></S>
      </LockBadge>

      <TabRow>
        <FileTab>文件</FileTab>
        <Tab $active>开始</Tab>
        {['插入', '设计', '页面布局', '引用', '邮件', '审阅', '视图', '加载项'].map(t => <Tab key={t}>{t}</Tab>)}
        <Tab $apart>格式</Tab>
        <SignIn><button>登录</button><Avatar /></SignIn>
      </TabRow>

      <Ribbon>
        <Group $w={121} $pad={7}>
          <GroupBody $top={4}>
            <Row $gap={7}>
              <PasteButton aria-label="粘贴"><Clipboard /><span>粘贴</span><Down /></PasteButton>
              <div>
                <SmallButton><Scissors />剪切</SmallButton>
                <SmallButton><CopyIcon />复制</SmallButton>
                <SmallButton><Brush />格式刷</SmallButton>
              </div>
            </Row>
          </GroupBody>
          <GroupFoot><span>剪贴板</span><Launch /></GroupFoot>
        </Group>

        <Group $w={326}>
          <GroupBody $top={12}>
            <ToolRows>
              <ToolRow>
                <ComboWrap $w={98}><Combo $size={14} aria-label="字体"><option>Times New Roman</option></Combo><Down /></ComboWrap>
                <ComboWrap $w={50}><Combo aria-label="字号"><option>四号</option></Combo><Down /></ComboWrap>
                <Tool $w={24} aria-label="增大字号"><GrowA up /></Tool>
                <Tool $w={24} aria-label="减小字号"><GrowA /></Tool>
                <SepBox $w={7} />
                <Tool $w={34}><Row $gap={4}><Glyph $weight={400}>Aa</Glyph><Down /></Row></Tool>
                <SepBox $w={12} />
                <Tool $w={24} aria-label="清除格式"><Eraser /></Tool>
                <Tool $w={22} aria-label="拼音指南"><Wen /></Tool>
                <Tool $w={24} aria-label="字符边框"><BoxA /></Tool>
              </ToolRow>
              <ToolRow>
                <Tool $w={22}><Glyph>B</Glyph></Tool>
                <Tool $w={24}><Glyph $italic $serif $size={15}>I</Glyph></Tool>
                <Tool $w={22}><Glyph $line="underline">U</Glyph></Tool>
                <Drop w={16} />
                <Tool $w={22}><Glyph $size={11} $weight={600} $line="line-through">abc</Glyph></Tool>
                <Tool $w={24}><Glyph>x<sub>2</sub></Glyph></Tool>
                <Tool $w={22}><Glyph>x<sup>2</sup></Glyph></Tool>
                <SepBox $w={12} />
                <Tool $w={20} aria-label="文本效果"><OutlineA /></Tool>
                <Drop w={12} c="#bbb" />
                <Tool $w={26} aria-label="突出显示"><Highlight /></Tool>
                <Drop w={9} />
                <Tool $w={27} aria-label="字体颜色"><AColor /></Tool>
                <Drop w={9} />
                <Tool $w={26} aria-label="字符底纹"><BoxA shade /></Tool>
                <Tool $w={22} aria-label="带圈字符"><ZiCircle /></Tool>
              </ToolRow>
            </ToolRows>
          </GroupBody>
          <GroupFoot><span>字体</span><Launch /></GroupFoot>
        </Group>

        <Group $w={282}>
          <GroupBody $top={12}>
            <ToolRows>
              <ToolRow>
                <Tool $w={23} aria-label="项目符号"><Bullets /></Tool>
                <Drop w={11} />
                <Tool $w={26} aria-label="编号"><Numbers /></Tool>
                <Drop w={10} />
                <Tool $w={25} aria-label="多级列表"><Multi /></Tool>
                <Drop w={9} />
                <SepBox $w={14} />
                <Tool $w={20} aria-label="减少缩进"><Indent out /></Tool>
                <Tool $w={27} aria-label="增加缩进"><Indent /></Tool>
                <SepBox $w={6} />
                <Tool $w={26} aria-label="中文版式"><AsianA /></Tool>
                <Drop w={6} />
                <SepBox $w={18} />
                <Tool $w={16} aria-label="排序"><SortAZ /></Tool>
                <SepBox $w={14} />
                <Tool $w={20} aria-label="显示标记"><ShowMarks /></Tool>
              </ToolRow>
              <ToolRow>
                <Tool $w={23} $on aria-label="左对齐"><Lines rows={[[0, 15], [0, 10], [0, 15], [0, 10]]} /></Tool>
                <Tool $w={25} aria-label="居中"><Lines rows={[[0, 15], [3, 12], [0, 15], [3, 12]]} /></Tool>
                <Tool $w={22} aria-label="右对齐"><Lines rows={[[0, 15], [5, 15], [0, 15], [5, 15]]} /></Tool>
                <Tool $w={24} aria-label="两端对齐"><Lines rows={[[0, 15], [0, 15], [0, 15], [0, 15]]} /></Tool>
                <Tool $w={22} aria-label="分散对齐"><Distribute /></Tool>
                <SepBox $w={10} />
                <Tool $w={22} aria-label="行距"><Spacing /></Tool>
                <Drop w={10} />
                <SepBox $w={14} />
                <Tool $w={20} aria-label="底纹"><Bucket /></Tool>
                <Drop w={14} c="#bbb" />
                <Tool $w={22} aria-label="边框"><Borders /></Tool>
                <Drop w={14} />
              </ToolRow>
            </ToolRows>
          </GroupBody>
          <GroupFoot><span>段落</span><Launch /></GroupFoot>
        </Group>

        <Group $grow $pad={5}>
          <GroupBody $top={7}>
            <Gallery>
              {gallery.map(g => (
                <GalleryItem key={g.n} $on={g.on}>
                  <Preview $size={g.size} $bold={g.bold} $italic={g.italic} $serif={g.serif}>{g.t}</Preview>
                  <PreviewName>{g.mark && <Ret />}{g.n}</PreviewName>
                </GalleryItem>
              ))}
              <GallerySteps>
                <button aria-label="上一行"><S w={6} h={4}><path d="M0 4h6L3 0z" fill="#ccc" /></S></button>
                <button aria-label="下一行"><Down /></button>
                <button aria-label="其他"><S w={8} h={8}><path d="M0 0.500h8" stroke="#666" /><path d="M1 4h6L4 7.500z" fill="#666" /></S></button>
              </GallerySteps>
            </Gallery>
          </GroupBody>
          <GroupFoot><span>样式</span><Launch /></GroupFoot>
        </Group>

        <Group $w={79} $pad={7}>
          <GroupBody $top={4}>
            <SmallButton><Binoculars />查找<Drop w={16} /></SmallButton>
            <SmallButton><Replace />替换</SmallButton>
            <SmallButton><ArrowPick />选择<Down /></SmallButton>
          </GroupBody>
          <GroupFoot><span>编辑</span></GroupFoot>
        </Group>
        <RibbonEnd>
          <button aria-label="折叠功能区"><S w={10} h={7}><path d="M1 6l4-4 4 4" stroke="#666" strokeWidth="2" /></S></button>
        </RibbonEnd>
      </Ribbon>

      <Main>
        <Pane $w={250} $side="left">
          <PaneHead>
            <h2>导航</h2>
            <button aria-label="选项"><Down s={10} /></button>
            <button aria-label="关闭"><Close /></button>
          </PaneHead>
          <SearchBox>
            <input aria-label="搜索文档" placeholder="搜索文档" />
            <Magnifier />
            <Down />
          </SearchBox>
          <PaneTabs><button>标题</button><button>页面</button><button>结果</button></PaneTabs>
          <Outline>
            {outline.map(([level, text]) => (
              <OutlineItem key={text} $level={level} $on={text.startsWith('1.5.3')}>
                {level < 3 && <Twist>{level === 2 && <S w={8} h={8}><path d="M8 0v8H0z" fill="#444" /></S>}</Twist>}
                <a href="#doc">{text}</a>
              </OutlineItem>
            ))}
          </Outline>
        </Pane>

        <DocArea id="doc">
          <Page>
            <PageHeader>
              <Corner $side="left" />
              <span>传智播客 PHP 学院</span>
              <Row><span>http://php.itcast.cn</span><Ret /></Row>
              <Corner $side="right" />
            </PageHeader>
            <MarkRow><Ret /></MarkRow>
            <Para>继续优化上面的代码<Ret /></Para>
            <Para>如果连接失败，会显示报错信息，这时候可能会暴露一下敏感信息<Ret /></Para>
            <Warning>
              <b>Warning</b>: mysql_connect() [<a href="#doc">function.mysql-connect</a>]: Access denied for user <Boxed>'root'</Boxed>@'localhost' (using<br />
              password: YES) in <b>F:\wamp\www\8-demo.php</b> on line <b>10</b><br />
              <LightLine>数据库连接失败</LightLine>
              <EndMark><Ret /></EndMark>
            </Warning>
            <Para $before={11}>通过<em>@</em>来屏蔽错误信息<Ret /></Para>
            <Shot>
              <Code>
                <CodeLine $cut><Tok $c="#4b4bb0">&lt;body&gt;</Tok></CodeLine>
                <CodeLine><Tok $c="#e8291e" $bold>&lt;?php</Tok></CodeLine>
                <CodeLine>
                  <Tok $c="#4a8fe0">$link=</Tok><AtBox>@</AtBox><Tok $c="#4343cc">mysql_connect(</Tok><Tok $c="#c8403a">'localhost'</Tok><Tok $c="#222">,</Tok><Tok $c="#c8403a">'root'</Tok><Tok $c="#222">,</Tok><Tok $c="#c8403a">'aa'</Tok><Tok $c="#4343cc">) or </Tok><Tok $c="#2f8040">die</Tok><Tok $c="#4343cc">(</Tok><Tok $c="#d8302a">'数据库连接失败'</Tok><Tok $c="#4343cc">)</Tok><Tok $c="#222">;</Tok>
                </CodeLine>
                <CodeLine><Tok $c="#e8291e" $bold>?&gt;</Tok></CodeLine>
                <CodeLine><Tok $c="#4b4bb0">&lt;/body&gt;</Tok></CodeLine>
                <CodeLine><Tok $c="#4b4bb0">&lt;/html&gt;</Tok><Caret /></CodeLine>
              </Code>
              <Browser>
                <AddressRow>
                  <S w={32} h={32}><circle cx="16" cy="16" r="15.500" fill="#cf6156" stroke="#a84e45" /><path d="M25 16H9M15 9l-7 7 7 7" stroke="#f4dcd9" strokeWidth="3" /></S>
                  <S w={22} h={22}><circle cx="11" cy="11" r="10" fill="#cf6156" stroke="#a84e45" /><path d="M5 11h11M12 6.500l4.500 4.500L12 15.500" stroke="#f4dcd9" strokeWidth="2" /></S>
                  <Address><IELogo s={15} /><span>http://<b>localhost</b>/8-demo.php</span></Address>
                </AddressRow>
                <BrowserMenu>
                  <span>文件(F)</span><span>编辑(E)</span><span>查看(V)</span><span>收藏夹(A)</span><span>工具(T)</span><span>帮助(H)</span>
                </BrowserMenu>
                <BrowserBody>数据库连接失败</BrowserBody>
              </Browser>
              <Frame viewBox="0 0 679 147" preserveAspectRatio="none" fill="none">
                <path d="M0.500 0.500h678v146H0.500z" stroke="#888" strokeDasharray="3 2" />
                {[[0, 0], [337, 0], [674, 0], [0, 71], [674, 71], [0, 142], [337, 142], [674, 142]].map(([x, y]) => (
                  <rect key={`${x}-${y}`} x={x} y={y} width="5" height="5" fill="#777" />
                ))}
                <path d="M557 48L502 123" stroke="#ee3a30" /><path d="M498 128l1.500-9 6 4.500z" fill="#ee1c14" />
              </Frame>
              <Pointer>
                <S w={62} h={62}>
                  <circle cx="31" cy="31" r="31" fill="#ffee00" />
                  <path d="M31.500 31v16l4-3.500 3 6.500 3-1.500-3-6h5z" fill="#fff" stroke="#222" />
                </S>
              </Pointer>
              <EndMark><Ret /></EndMark>
            </Shot>
            <Para><Ret /></Para>
            <Heading><span>1.5.4</span>终止执行<Ret /></Heading>
          </Page>
        </DocArea>

        <ScrollBar>
          <ScrollButton aria-label="向上"><S w={8} h={4}><path d="M0 4h8L4 0z" fill="#777" /></S></ScrollButton>
          <ScrollEnd>
            <ScrollThumb />
            <ScrollButton aria-label="向下"><Down s={8} c="#777" /></ScrollButton>
          </ScrollEnd>
        </ScrollBar>

        <Pane $w={209} $side="right">
          <PaneHead>
            <h2>样式</h2>
            <button aria-label="选项"><Down s={10} /></button>
            <button aria-label="关闭"><Close /></button>
          </PaneHead>
          <StyleList>
            {styleNames.map(([name, kind], i) => (
              <li key={i}><span>{name}</span>{kind === 'a' && <Linked />}{kind === 'p' && <RetBig />}</li>
            ))}
          </StyleList>
          <Check><input type="checkbox" />显示预览</Check>
          <Check><input type="checkbox" />禁用链接样式</Check>
          <StyleActions>
            <button aria-label="新建样式"><StyleIcon kind={0} /></button>
            <button aria-label="样式检查器"><StyleIcon kind={1} /></button>
            <button aria-label="管理样式"><StyleIcon kind={2} /></button>
            <a href="#options">选项...</a>
          </StyleActions>
        </Pane>
      </Main>
      <SideHandle aria-label="展开"><S w={7} h={12}><path d="M6 1L1 6l5 5" stroke="#888" /></S></SideHandle>

      <StatusBar>
        <PageCount>第 18 页 , 共 18 页</PageCount>
        <span>1729 个字</span>
        <S w={16} h={13}><path d="M7.500 12.500V2L5 0.500H0.500v11H6zM7.500 2L10 0.500h4.500V3M14.500 8v3.500H9M9 9l5-6 2 1.500-5 5.500H9z" stroke="#e8eef7" /></S>
        <span>中文(中国)</span>
        <ViewButtons>
          <Tool $w={40} aria-label="阅读视图"><S w={15} h={13}><path d="M7.500 12.500V1.500L6 0.500H0.500v11H6zM7.500 1.500L9 0.500h5.500v11H9zM2 3.500h4M2 5.500h4M2 7.500h4M2 9.500h4M9 3.500h4M9 5.500h4M9 7.500h4M9 9.500h4" stroke="#c9d8ec" /></S></Tool>
          <Tool $w={40} $dark aria-label="页面视图"><S w={15} h={14}><path d="M0.500 0.500h14v13H0.500zM2 3.500h11M2 5.500h11M2 7.500h11M2 9.500h11M2 11.500h11" stroke="#d9e4f3" /></S></Tool>
          <Tool $w={42} aria-label="Web 视图"><S w={16} h={15}><path d="M7 12.500H0.500v-12h12V6M2 3.500h9M2 5.500h7M2 7.500h5M2 9.500h5" stroke="#c9d8ec" /><circle cx="11" cy="10" r="4" fill="#c9d8ec" /><path d="M9 8l2 1v2l2 1" stroke={BLUE} /></S></Tool>
          <Tool $w={14} aria-label="缩小"><S w={7} h={2}><path d="M0 1h7" stroke="#fff" strokeWidth="2" /></S></Tool>
          <ZoomRange type="range" aria-label="缩放" min={0} max={100} defaultValue={50} />
          <Tool $w={14} aria-label="放大"><S w={9} h={9}><path d="M0 4.500h9M4.500 0v9" stroke="#fff" strokeWidth="2" /></S></Tool>
          <ZoomValue>100%</ZoomValue>
        </ViewButtons>
      </StatusBar>

      <TaskBar>
        <StartButton aria-label="开始菜单"><WinLogo /></StartButton>
        <TaskButtons>
          <TaskButton $on aria-label="Word"><OfficeTile /></TaskButton>
          <TaskButton aria-label="Live"><Live /></TaskButton>
          <TaskButton aria-label="Dreamweaver"><Dreamweaver /></TaskButton>
          <TaskButton $stack aria-label="文件夹"><Folder /></TaskButton>
          <TaskButton aria-label="Visio"><OfficeTile visio /></TaskButton>
          <TaskButton aria-label="记事本"><Notepad /></TaskButton>
          <TaskButton aria-label="数据库"><Cylinders /></TaskButton>
          <TaskButton aria-label="帮助"><HelpDoc /></TaskButton>
          <TaskButton aria-label="命令行"><Console /></TaskButton>
          <TaskButton $stack aria-label="浏览器"><IELogo s={32} /></TaskButton>
        </TaskButtons>
        <Tray>
          <TrayItem $w={26} aria-label="显示隐藏图标"><S w={8} h={4}><path d="M0 4h8L4 0z" fill="#fff" /></S></TrayItem>
          <TrayItem $w={26} $on aria-label="录像"><S w={13} h={15}><path d="M0 0h13v15H0z" fill="#111" /><path d="M4 1h5v6H4zM4 8h5v6H4z" fill="#e33" /><path d="M1.500 1v13M11.500 1v13" stroke="#fff" strokeDasharray="2 1.500" /></S></TrayItem>
          <TrayItem $w={25} aria-label="录制"><S w={17} h={17}><path d="M5 .5h7l4.500 4.500v7L12 16.500H5L.5 12V5z" fill="#fff" stroke="#555" /><circle cx="8.500" cy="8.500" r="7" fill="#d40f0f" /></S></TrayItem>
          <TrayItem $w={25} aria-label="消息"><S w={17} h={17}><circle cx="11" cy="4" r="4" fill="#4aa0e8" /><circle cx="12" cy="12" r="5" fill="#4aa0e8" /><circle cx="5.500" cy="7" r="5.500" fill="#f7c23a" /><path d="M3 11l0 5 4-4z" fill="#f7c23a" /></S></TrayItem>
          <TrayItem $w={25} aria-label="速度"><S w={17} h={12}><path d="M1 10.500C0 4 4 1 8.500 1S17 4 16 10.500z" fill="#fff" stroke="#222" strokeWidth="1.500" /><path d="M5 10V6l3-2v6M11 10V5M13 10V7" stroke="#222" strokeWidth="1.800" /></S></TrayItem>
          <TrayItem $w={25} aria-label="电池"><S w={17} h={17}><path d="M8.500 3.500h7v13h-7zM10.500 1.500h3v2h-3z" fill="#b88f89" stroke="#fff" strokeWidth="1.500" /><path d="M1 3v4h5V3M2 1v2M5 1v2M3.500 7v9" stroke="#fff" strokeWidth="1.500" /></S></TrayItem>
          <TrayItem $w={25} aria-label="网络"><S w={17} h={16}><path d="M6 3.500h10v8H6zM8 14.500h6M11 12v3M1 1h4v4H1zM3 5v9h3" stroke="#fff" strokeWidth="1.500" /></S></TrayItem>
          <TrayItem $w={25} aria-label="音量"><S w={9} h={15}><path d="M0 5h3l5-5v15l-5-5H0z" fill="#fff" /></S></TrayItem>
          <TrayItem $w={38}><Glyph $color="#fff" $weight={400} $size={15}>中</Glyph></TrayItem>
          <TrayItem $w={16} aria-label="输入法"><S w={16} h={16}><path d="M.5.5h15v15H.5z" fill="#fff" stroke="#222" /><path d="M3.500 13V3.500L8 10l4.500-6.500V13" stroke="#222" strokeWidth="2" /></S></TrayItem>
          <Clock><time>15:00</time><time>2015/6/5</time></Clock>
        </Tray>
      </TaskBar>
    </Screen>
  );
}
